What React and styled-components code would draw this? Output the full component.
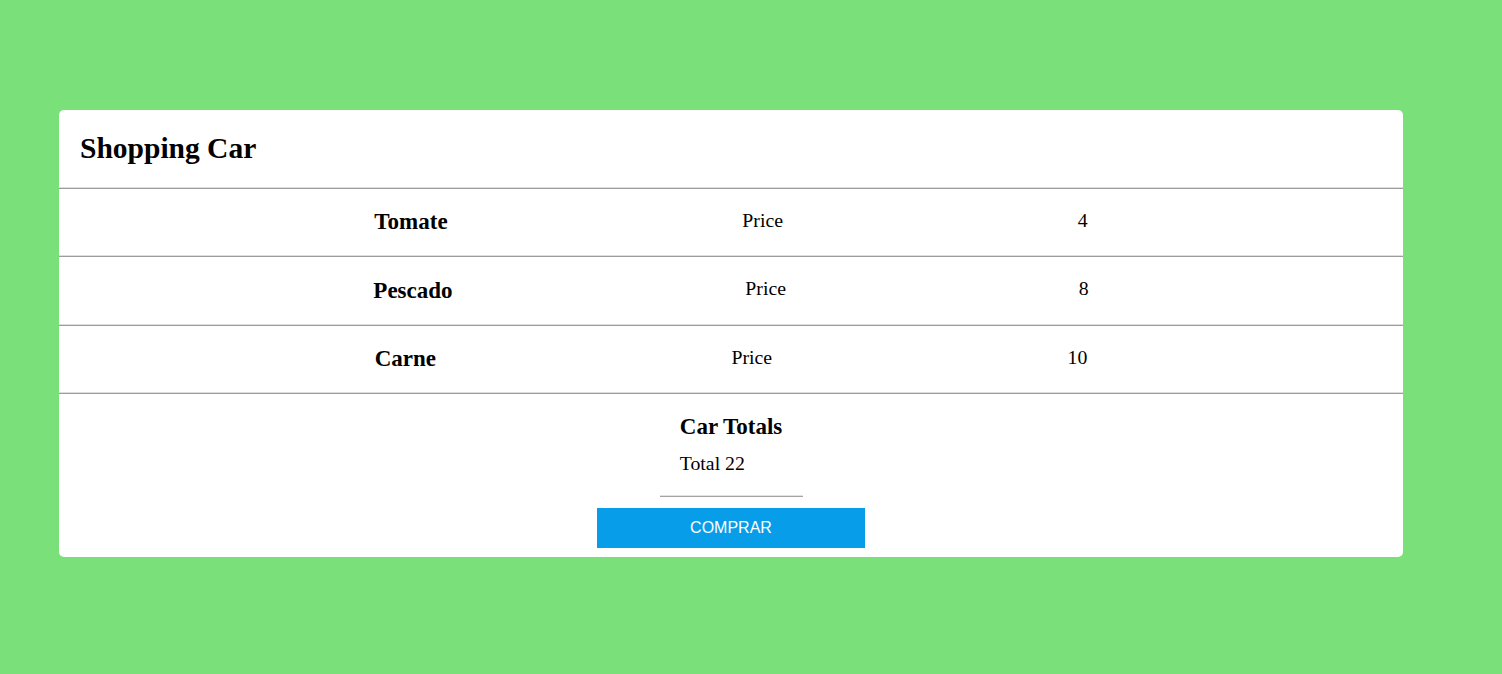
import React from 'react'
import styled, { createGlobalStyle } from 'styled-components'

const products = [
  { name: 'Tomate', price: 4, height: 66 },
  { name: 'Pescado', price: 8, height: 67 },
  { name: 'Carne', price: 10, height: 66 },
]

function App() {
  const total = products.reduce((sum, p) => sum + p.price, 0)

  return (
    <>
      <GlobalStyle />
      <Page>
        <Card>
          <Header>
            <Title>Shopping Car</Title>
          </Header>
          <Divider />
          {products.map((p) => (
            <React.Fragment key={p.name}>
              <Row $height={p.height}>
                <ProductName>{p.name}</ProductName>
                <Cell>Price</Cell>
                <Cell>{p.price}</Cell>
              </Row>
              <Divider />
            </React.Fragment>
          ))}
          <Totals>
            <TotalsBox>
              <TotalsTitle>Car Totals</TotalsTitle>
              <TotalText>Total {total}</TotalText>
            </TotalsBox>
            <ShortRule />
            <BuyButton>COMPRAR</BuyButton>
          </Totals>
        </Card>
      </Page>
    </>
  )
}

export default App

const GlobalStyle = createGlobalStyle`
  html, body {
    margin: 0;
    padding: 0;
    background: #79e07a;
  }

  body {
    font-family: "Liberation Serif", "Times New Roman", serif;
    font-size: 19.2px;
    color: #000;
  }
`

const Page = styled.div`
  min-height: 674px;
  padding: 110px 0 0 59px;
  box-sizing: border-box;
`

const Card = styled.div`
  width: 1344px;
  background: #fff;
  border-radius: 5px;
  display: flex;
  flex-direction: column;
  overflow: hidden;
`

const Header = styled.div`
  height: 77px;
  display: flex;
  align-items: center;
  padding-left: 21px;
`

const Title = styled.h2`
  margin: 0;
  font-size: 29.5px;
  font-weight: 700;
`

const Divider = styled.div`
  height: 0;
  border-top: 1px solid #dedede;
  border-bottom: 1px solid #9c9c9c;
`

const Row = styled.div`
  height: ${(p) => p.$height}px;
  width: 75%;
  margin: 0 auto;
  display: flex;
  align-items: center;
  justify-content: space-around;
  padding-bottom: 4px;
  box-sizing: border-box;
`

const ProductName = styled.h3`
  margin: 0;
  font-size: 23px;
  font-weight: 700;
  position: relative;
  top: 2px;
`

const Cell = styled.p`
  margin: 0;
  font-size: 19.8px;
`

const Totals = styled.div`
  display: flex;
  flex-direction: column;
  align-items: center;
  padding: 20px 0 9px;
`

const TotalsBox = styled.div`
  display: flex;
  flex-direction: column;
  align-items: flex-start;
`

const TotalsTitle = styled.h3`
  margin: 0;
  font-size: 23px;
  font-weight: 700;
`

const TotalText = styled.p`
  margin: 12px 0 0;
  font-size: 19.8px;
`

const ShortRule = styled.div`
  width: 143px;
  height: 0;
  margin: 20px 0 0;
  border-top: 1px solid #e2e2e2;
  border-bottom: 1px solid #a4a4a4;
`

const BuyButton = styled.button`
  margin-top: 11px;
  width: 268px;
  height: 40px;
  border: none;
  background: #089de8;
  color: #fff;
  font-family: "Liberation Sans", Arial, sans-serif;
  font-size: 16px;
  cursor: pointer;
`
